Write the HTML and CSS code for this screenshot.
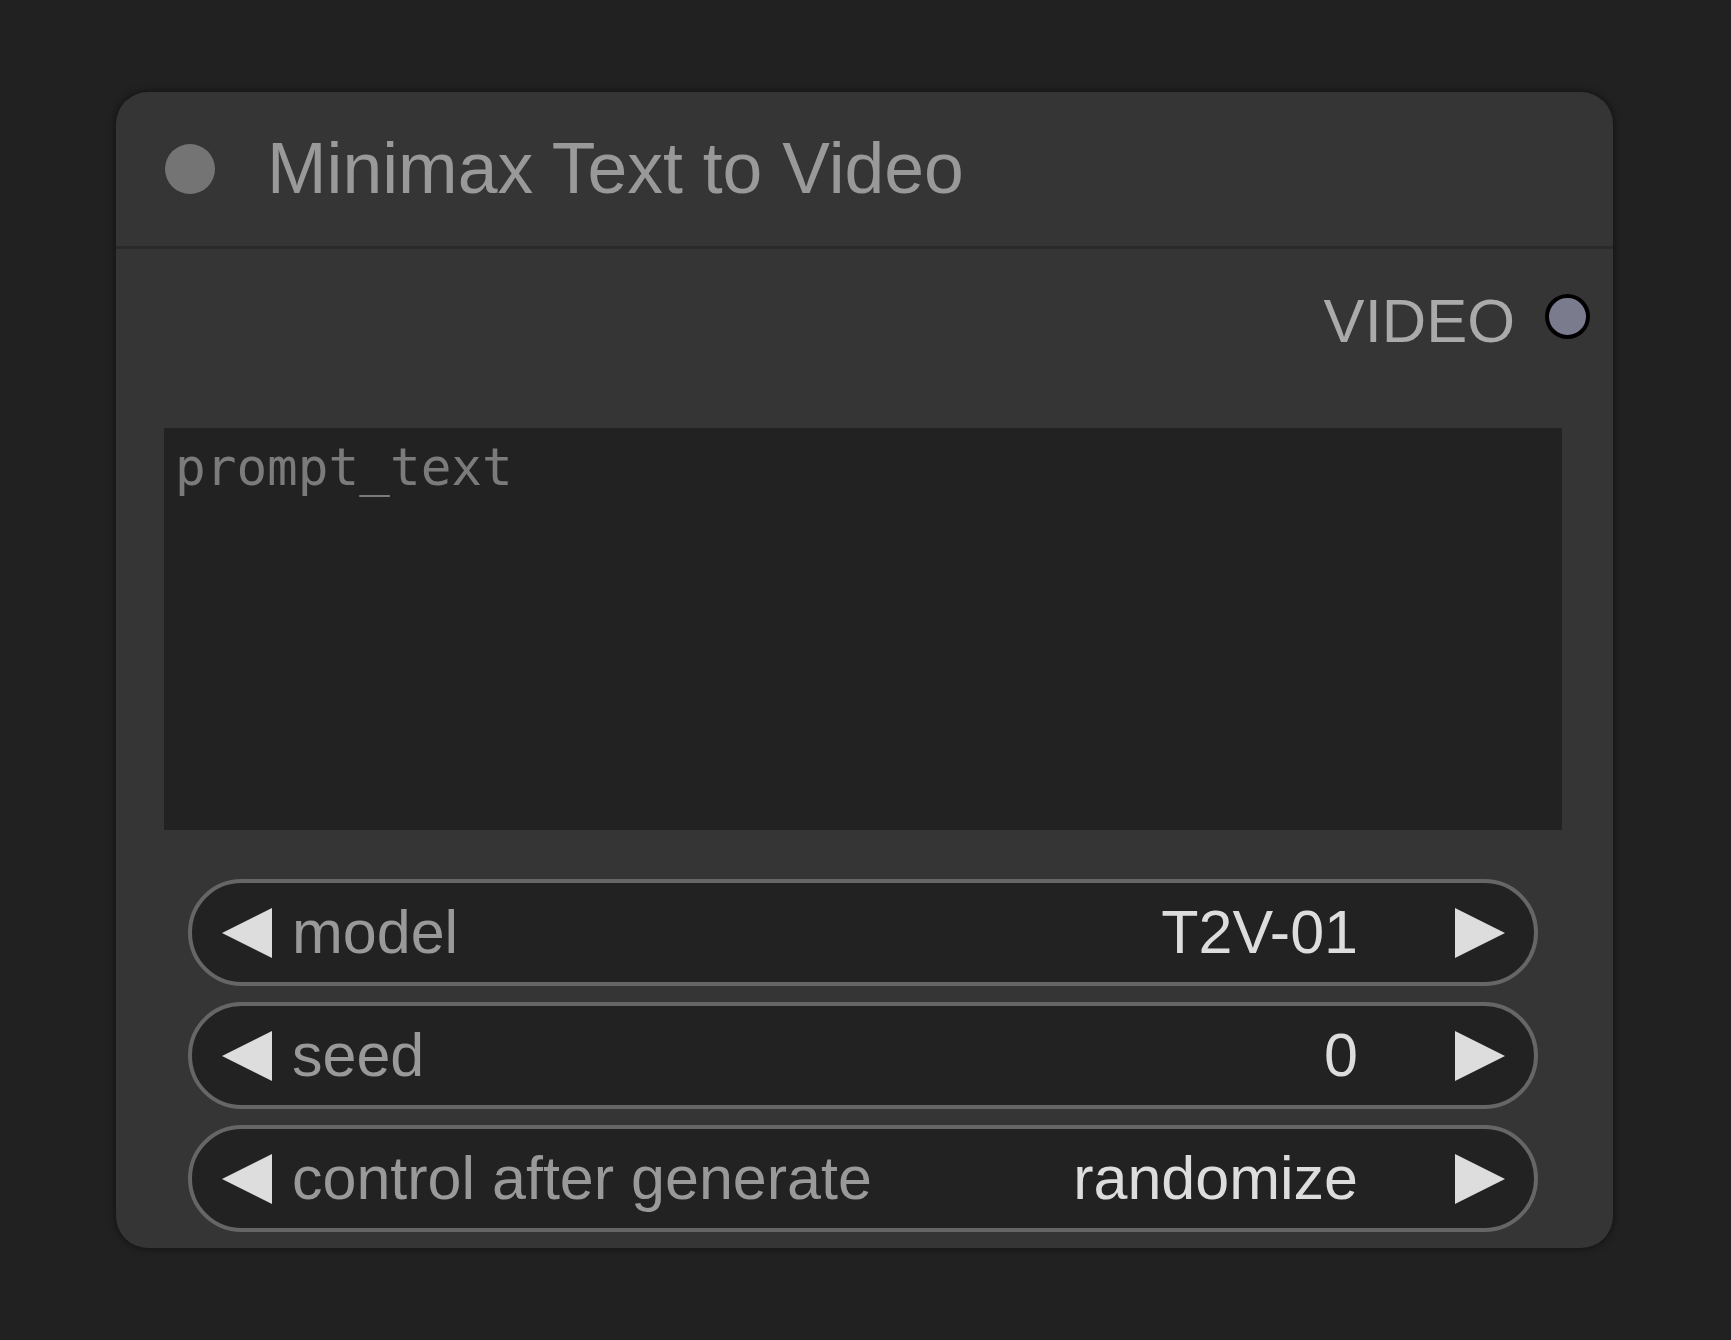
FILE: index.html
```html
<!DOCTYPE html>
<html>
<head>
<meta charset="utf-8">
<link rel="stylesheet" href="styles.css">
</head>
<body>
<div class="node">
  <div class="title-bar">
    <span class="title-dot"></span>
    <span class="title">Minimax Text to Video</span>
  </div>
  <div class="outputs">
    <span class="out-label">VIDEO</span>
    <span class="out-dot"></span>
  </div>
  <div class="prompt">prompt_text</div>
  <div class="widgets">
    <div class="pill">
      <svg class="arrow" viewBox="0 0 50 50"><polygon points="0,25 50,0 50,50"/></svg>
      <span class="label">model</span>
      <span class="value">T2V-01</span>
      <svg class="arrow" viewBox="0 0 50 50"><polygon points="50,25 0,0 0,50"/></svg>
    </div>
    <div class="pill">
      <svg class="arrow" viewBox="0 0 50 50"><polygon points="0,25 50,0 50,50"/></svg>
      <span class="label">seed</span>
      <span class="value">0</span>
      <svg class="arrow" viewBox="0 0 50 50"><polygon points="50,25 0,0 0,50"/></svg>
    </div>
    <div class="pill">
      <svg class="arrow" viewBox="0 0 50 50"><polygon points="0,25 50,0 50,50"/></svg>
      <span class="label">control after generate</span>
      <span class="value">randomize</span>
      <svg class="arrow" viewBox="0 0 50 50"><polygon points="50,25 0,0 0,50"/></svg>
    </div>
  </div>
</div>
</body>
</html>
```
FILE: styles.css
```css
html, body {
  margin: 0;
  padding: 0;
  background: #212121;
  width: 1731px;
  height: 1340px;
  overflow: hidden;
  font-family: "Liberation Sans", Arial, sans-serif;
}

body {
  padding-top: 92px;
  padding-left: 116px;
  box-sizing: border-box;
}

.node {
  width: 1497px;
  height: 1156px;
  background: #353535;
  border-radius: 32px;
  box-shadow: 0 0 6px 2px rgba(0, 0, 0, 0.35);
  display: flex;
  flex-direction: column;
  box-sizing: border-box;
}

.title-bar {
  height: 154px;
  border-bottom: 3px solid #2a2a2a;
  display: flex;
  align-items: center;
  padding-left: 49px;
  box-sizing: content-box;
}

.title-dot {
  width: 50px;
  height: 50px;
  border-radius: 50%;
  background: #747474;
  flex: none;
}

.title {
  margin-left: 52px;
  font-size: 71.5px;
  line-height: 70px;
  color: #999999;
  position: relative;
  top: -1px;
}

.outputs {
  display: flex;
  justify-content: flex-end;
  align-items: center;
  margin-top: 42px;
  height: 60px;
  padding-right: 23px;
}

.out-label {
  font-size: 61.5px;
  line-height: 60px;
  color: #aaaaaa;
}

.out-dot {
  width: 37px;
  height: 37px;
  border-radius: 50%;
  background: #7b7b8e;
  border: 4px solid #000;
  margin-left: 30px;
  position: relative;
  top: -5px;
}

.prompt {
  margin: 77px 51px 0 48px;
  height: 402px;
  background: #222222;
  box-sizing: border-box;
  padding: 10px 0 0 11px;
  font-family: "DejaVu Sans Mono", monospace;
  font-size: 51px;
  color: #7b7b7b;
}

.widgets {
  display: flex;
  flex-direction: column;
  gap: 16px;
  margin: 49px 75px 0 72px;
}

.pill {
  height: 107px;
  box-sizing: border-box;
  border: 4px solid #666666;
  border-radius: 54px;
  background: #222222;
  display: flex;
  align-items: center;
  padding: 0 29px 0 30px;
}

.arrow {
  width: 50px;
  height: 50px;
  fill: #dddddd;
  flex: none;
}

.label {
  margin-left: 20px;
  font-size: 61px;
  line-height: 60px;
  color: #999999;
  flex: 1;
  position: relative;
  top: -1px;
}

.value {
  font-size: 61px;
  line-height: 60px;
  color: #dddddd;
  margin-right: 97px;
  position: relative;
  top: -1px;
}
```
